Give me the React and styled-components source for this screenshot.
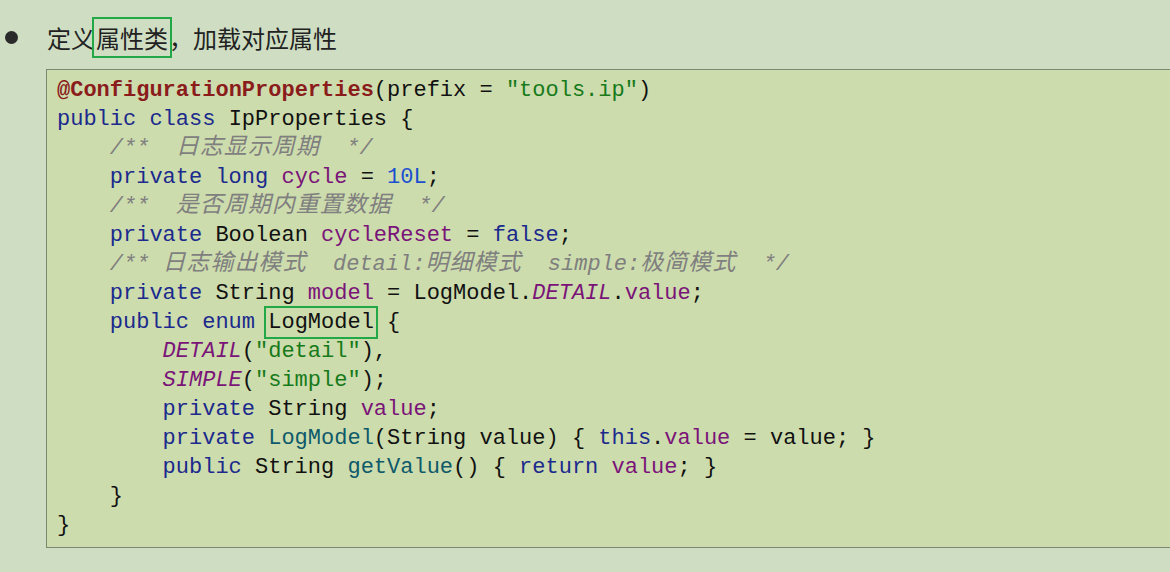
import styled, { createGlobalStyle } from "styled-components";

const Global = createGlobalStyle`
  html, body {
    margin: 0;
    padding: 0;
    background: #cfdec3;
    overflow: hidden;
  }
`;

const Page = styled.div`
  width: 1170px;
  height: 572px;
  padding: 19px 0 0 0;
  box-sizing: border-box;
`;

const Heading = styled.div`
  display: flex;
  align-items: center;
  height: 36px;
  font-family: "Noto Sans CJK SC", "Noto Sans", sans-serif;
  font-size: 24px;
  color: #222;
`;

const Bullet = styled.span`
  width: 13px;
  height: 13px;
  border-radius: 50%;
  background: #2a2a2a;
  margin: 1px 29px 0 5px;
  flex: none;
`;

const Mark = styled.span`
  outline: 2.5px solid #23a848;
  outline-offset: ${(p) => p.$offset || 1}px;
  padding: 0 ${(p) => p.$pad || 0}px;
`;

const CodeBox = styled.pre`
  margin: 14px -40px 0 46px;
  padding: 6px 10px 7px 10px;
  background: #cddcad;
  border: 1px solid #7b8872;
  font-family: "Liberation Mono", "Noto Sans CJK SC", monospace;
  font-size: 22px;
  line-height: 29px;
  color: #111;
`;

const Line = styled.div`
  height: 29px;
  white-space: pre;
  padding-left: ${(p) => (p.$indent || 0) * 13.2}px;
`;

const Tok = styled.span`
  color: ${(p) => p.$c};
  font-style: ${(p) => (p.$i ? "italic" : "normal")};
  font-weight: ${(p) => (p.$b ? "bold" : "normal")};
`;

const Han = styled.span`
  font-size: 23px;
  letter-spacing: 1px;
  line-height: 1;
`;

const KW = "#1b2a8c";
const ANN = "#8b1c1c";
const FLD = "#7a1478";
const STR = "#177a1a";
const NUM = "#1a4fd0";
const MTH = "#0e5a6a";
const CMT = "#7f7f7f";

const K = ({ children }) => <Tok $c={KW}>{children}</Tok>;
const F = ({ children, i }) => <Tok $c={FLD} $i={i}>{children}</Tok>;
const C = ({ children }) => <Tok $c={CMT} $i>{children}</Tok>;

export default function App() {
  return (
    <Page>
      <Global />
      <Heading>
        <Bullet />
        定义<Mark $offset={0} $pad={1}>属性类</Mark>，加载对应属性
      </Heading>
      <CodeBox>
        <Line>
          <Tok $c={ANN} $b>@ConfigurationProperties</Tok>(prefix = <Tok $c={STR}>"tools.ip"</Tok>)
        </Line>
        <Line>
          <K>public class</K> IpProperties {"{"}
        </Line>
        <Line $indent={4}>
          <C>/**  <Han>日志显示周期</Han>  */</C>
        </Line>
        <Line $indent={4}>
          <K>private long</K> <F>cycle</F> = <Tok $c={NUM}>10L</Tok>;
        </Line>
        <Line $indent={4}>
          <C>/**  <Han>是否周期内重置数据</Han>  */</C>
        </Line>
        <Line $indent={4}>
          <K>private</K> Boolean <F>cycleReset</F> = <K>false</K>;
        </Line>
        <Line $indent={4}>
          <C>/** <Han>日志输出模式</Han>  detail:<Han>明细模式</Han>  simple:<Han>极简模式</Han>  */</C>
        </Line>
        <Line $indent={4}>
          <K>private</K> String <F>model</F> = LogModel.<F i>DETAIL</F>.<F>value</F>;
        </Line>
        <Line $indent={4}>
          <K>public enum</K> <Mark $offset={2}>LogModel</Mark> {"{"}
        </Line>
        <Line $indent={8}>
          <F i>DETAIL</F>(<Tok $c={STR}>"detail"</Tok>),
        </Line>
        <Line $indent={8}>
          <F i>SIMPLE</F>(<Tok $c={STR}>"simple"</Tok>);
        </Line>
        <Line $indent={8}>
          <K>private</K> String <F>value</F>;
        </Line>
        <Line $indent={8}>
          <K>private</K> <Tok $c={MTH}>LogModel</Tok>(String value) {"{"} <K>this</K>.<F>value</F> = value; {"}"}
        </Line>
        <Line $indent={8}>
          <K>public</K> String <Tok $c={MTH}>getValue</Tok>() {"{"} <K>return</K> <F>value</F>; {"}"}
        </Line>
        <Line $indent={4}>{"}"}</Line>
        <Line>{"}"}</Line>
      </CodeBox>
    </Page>
  );
}
